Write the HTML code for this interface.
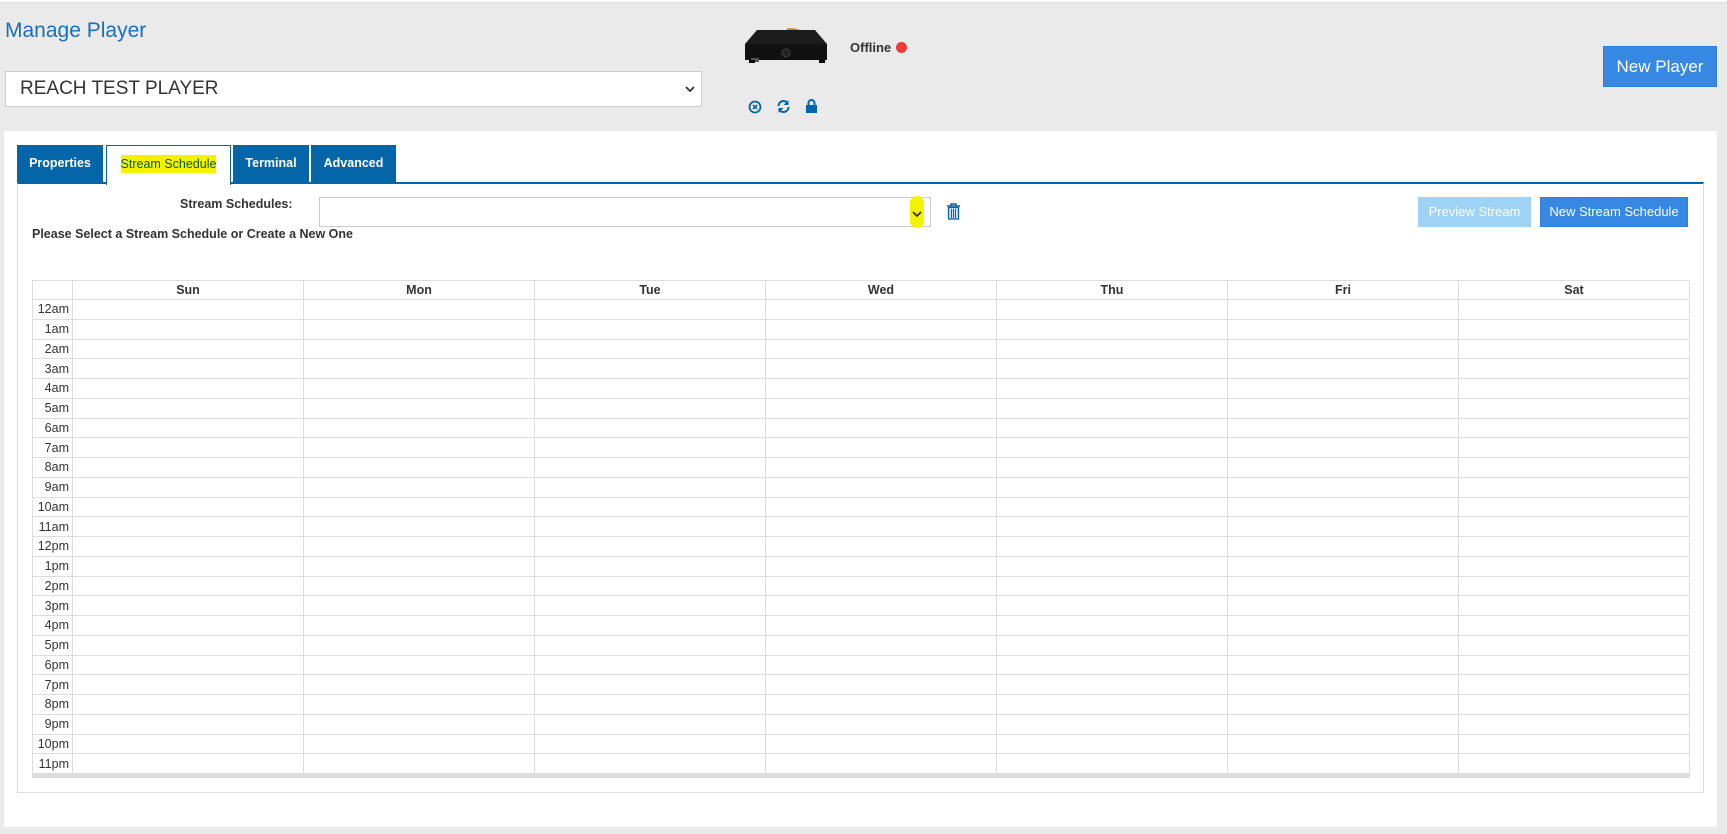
<!DOCTYPE html>
<html><head><meta charset="utf-8"><style>
*{box-sizing:border-box}
body{margin:0;width:1727px;height:834px;background:#eaeaea;font-family:"Liberation Sans",Arial,sans-serif;position:relative;overflow:hidden;color:#333}
.abs{position:absolute}
#top{left:0;top:0;width:1727px;height:3px;background:#fff;border-bottom:1px solid #ddd}
h1{position:absolute;left:5px;top:19px;margin:0;font-weight:normal;font-size:21px;color:#1a6fb5}
.sel{background:#fff;border:1px solid #ccc}
.btn{color:#fff;text-align:center;border:1px solid #2f7fd8;background:#3788e3}
.tab{position:absolute;top:145px;height:38px;background:#0465a8;color:#fff;font-size:12.5px;font-weight:bold;line-height:36px;text-align:center}
table{border-collapse:collapse;table-layout:fixed}
td,th{border:1px solid #ddd;padding:0;font-size:12.5px}
th{height:19px;font-weight:bold;color:#333}
td{height:19.75px}
td.t{text-align:right;padding-right:3px;color:#333}
</style></head><body>
<div class="abs" id="top"></div>
<h1>Manage Player</h1>
<div class="abs sel" style="left:5px;top:71px;width:697px;height:36px;font-size:19px;line-height:34px;padding-left:14px;color:#333">REACH TEST PLAYER
<svg class="abs" style="right:6px;top:13px" width="10" height="8" viewBox="0 0 10 8"><path d="M1 2l4 4 4-4" stroke="#333" stroke-width="1.8" fill="none"/></svg></div>
<svg class="abs" style="left:743px;top:28px" width="86" height="40" viewBox="0 0 86 40"><path d="M44 2q6-1 12 1" stroke="#c8853a" stroke-width="3" fill="none"/><path d="M14 2h58l12 14v16H2V16z" fill="#1c1c1c"/><path d="M2 16h82v16H2z" fill="#111"/><circle cx="43" cy="25" r="4" fill="#222" stroke="#444"/><rect x="8" y="30" width="8" height="4" fill="#555"/><rect x="6" y="32" width="6" height="3" fill="#000"/><rect x="76" y="32" width="6" height="3" fill="#000"/></svg>
<div class="abs" style="left:850px;top:40px;font-size:13px;font-weight:bold;color:#333">Offline</div>
<div class="abs" style="left:896px;top:42px;width:11px;height:11px;border-radius:50%;background:#f03a3a"></div>
<svg class="abs" style="left:748px;top:100px" width="14" height="14" viewBox="0 0 14 14"><circle cx="7" cy="7" r="5.5" stroke="#0465a8" stroke-width="1.8" fill="none"/><path d="M5 5l4 4M9 5l-4 4" stroke="#0465a8" stroke-width="1.6"/></svg>
<svg class="abs" style="left:776px;top:99px" width="15" height="15" viewBox="0 0 15 15"><path d="M2.5 7a5 5 0 0 1 9-3M12.5 8a5 5 0 0 1-9 3" stroke="#0465a8" stroke-width="2" fill="none"/><path d="M12.5 1v5h-5zM2.5 14v-5h5z" fill="#0465a8"/></svg>
<svg class="abs" style="left:805px;top:99px" width="13" height="14" viewBox="0 0 13 14"><path d="M3.5 6V4a3 3 0 0 1 6 0v2" stroke="#0465a8" stroke-width="2" fill="none"/><rect x="1" y="6" width="11" height="8" fill="#0465a8"/></svg>
<div class="abs btn" style="left:1603px;top:46px;width:114px;height:41px;font-size:17px;line-height:39px">New Player</div>
<div class="abs" style="left:4px;top:131px;width:1713px;height:696px;background:#fff"></div>
<div class="abs" style="left:17px;top:182px;width:1687px;height:611px;border:1px solid #ddd;border-top:2px solid #0465a8"></div>
<div class="tab" style="left:17px;width:86px">Properties</div>
<div class="tab" style="left:106px;width:125px;background:#fff;border:1px solid #0465a8;border-bottom:none;height:40px;font-weight:normal;color:#0b5a2a"><span style="background:#f5f200;padding:2px 0">Stream Schedule</span></div>
<div class="tab" style="left:233px;width:76px">Terminal</div>
<div class="tab" style="left:311px;width:85px">Advanced</div>
<div class="abs" style="left:180px;top:197px;font-size:12.5px;font-weight:bold">Stream Schedules:</div>
<div class="abs sel" style="left:319px;top:197px;width:612px;height:30px"><div class="abs" style="right:6px;top:-2px;width:14px;height:32px;background:#f5f200;border-radius:7px"></div><svg class="abs" style="right:8px;top:12px" width="10" height="8" viewBox="0 0 10 8"><path d="M1 2l4 4 4-4" stroke="#333" stroke-width="1.8" fill="none"/></svg></div>
<svg class="abs" style="left:946px;top:203px" width="15" height="17" viewBox="0 0 15 17"><path d="M1 3h13M5 3V1h5v2" stroke="#0465a8" stroke-width="1.5" fill="none"/><rect x="2.5" y="4.5" width="10" height="11.5" fill="#cfe3f5" stroke="#0465a8" stroke-width="1.3"/><path d="M5.5 6v9M7.5 6v9M9.5 6v9" stroke="#0465a8" stroke-width="1"/></svg>
<div class="abs" style="left:32px;top:227px;font-size:12.5px;font-weight:bold">Please Select a Stream Schedule or Create a New One</div>
<div class="abs btn" style="left:1418px;top:197px;width:113px;height:30px;font-size:13px;line-height:28px;background:#9fd3f5;border-color:#9fd3f5">Preview Stream</div>
<div class="abs btn" style="left:1540px;top:197px;width:148px;height:30px;font-size:13px;line-height:28px">New Stream Schedule</div>
<div class="abs" style="left:32px;top:280px;width:1658px;border-bottom:4px solid #ddd">
<table style="width:1658px">
<colgroup><col style="width:40px"><col><col><col><col><col><col><col></colgroup>
<tr><th></th><th>Sun</th><th>Mon</th><th>Tue</th><th>Wed</th><th>Thu</th><th>Fri</th><th>Sat</th></tr>
<tr><td class="t" style="height:17px">12am</td><td></td><td></td><td></td><td></td><td></td><td></td><td></td></tr>
<tr><td class="t">1am</td><td></td><td></td><td></td><td></td><td></td><td></td><td></td></tr>
<tr><td class="t">2am</td><td></td><td></td><td></td><td></td><td></td><td></td><td></td></tr>
<tr><td class="t">3am</td><td></td><td></td><td></td><td></td><td></td><td></td><td></td></tr>
<tr><td class="t">4am</td><td></td><td></td><td></td><td></td><td></td><td></td><td></td></tr>
<tr><td class="t">5am</td><td></td><td></td><td></td><td></td><td></td><td></td><td></td></tr>
<tr><td class="t">6am</td><td></td><td></td><td></td><td></td><td></td><td></td><td></td></tr>
<tr><td class="t">7am</td><td></td><td></td><td></td><td></td><td></td><td></td><td></td></tr>
<tr><td class="t">8am</td><td></td><td></td><td></td><td></td><td></td><td></td><td></td></tr>
<tr><td class="t">9am</td><td></td><td></td><td></td><td></td><td></td><td></td><td></td></tr>
<tr><td class="t">10am</td><td></td><td></td><td></td><td></td><td></td><td></td><td></td></tr>
<tr><td class="t">11am</td><td></td><td></td><td></td><td></td><td></td><td></td><td></td></tr>
<tr><td class="t">12pm</td><td></td><td></td><td></td><td></td><td></td><td></td><td></td></tr>
<tr><td class="t">1pm</td><td></td><td></td><td></td><td></td><td></td><td></td><td></td></tr>
<tr><td class="t">2pm</td><td></td><td></td><td></td><td></td><td></td><td></td><td></td></tr>
<tr><td class="t">3pm</td><td></td><td></td><td></td><td></td><td></td><td></td><td></td></tr>
<tr><td class="t">4pm</td><td></td><td></td><td></td><td></td><td></td><td></td><td></td></tr>
<tr><td class="t">5pm</td><td></td><td></td><td></td><td></td><td></td><td></td><td></td></tr>
<tr><td class="t">6pm</td><td></td><td></td><td></td><td></td><td></td><td></td><td></td></tr>
<tr><td class="t">7pm</td><td></td><td></td><td></td><td></td><td></td><td></td><td></td></tr>
<tr><td class="t">8pm</td><td></td><td></td><td></td><td></td><td></td><td></td><td></td></tr>
<tr><td class="t">9pm</td><td></td><td></td><td></td><td></td><td></td><td></td><td></td></tr>
<tr><td class="t">10pm</td><td></td><td></td><td></td><td></td><td></td><td></td><td></td></tr>
<tr><td class="t">11pm</td><td></td><td></td><td></td><td></td><td></td><td></td><td></td></tr>
</table></div>
</body></html>
